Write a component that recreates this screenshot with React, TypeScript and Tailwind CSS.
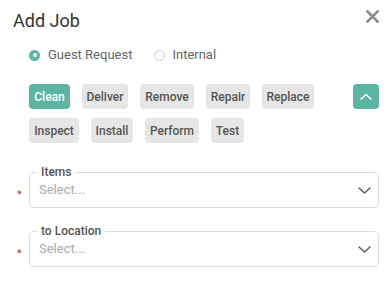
import React from "react";

const chipsRow1: [string, number][] = [
  ["Clean", 41],
  ["Deliver", 46],
  ["Remove", 54],
  ["Repair", 44],
  ["Replace", 52],
];
const chipsRow2: [string, number][] = [
  ["Inspect", 50],
  ["Install", 42],
  ["Perform", 54],
  ["Test", 33],
];

function Chip({ label, width, active }: { label: string; width: number; active?: boolean }) {
  return (
    <div
      style={{ width }}
      className={
        "h-[25px] flex items-center justify-center rounded-[4px] text-[12px] font-medium " +
        (active ? "bg-[#5cb5a3] text-white" : "bg-[#e6e6e6] text-[#555]")
      }
    >
      {label}
    </div>
  );
}

function Field({ label }: { label: string }) {
  return (
    <div className="flex items-start">
      <div className="w-4 pt-[24px] text-[11px] leading-none text-[#c0392b] pl-[4px]">*</div>
      <fieldset className="flex-1 border border-[#dcdcdc] rounded-[4px] pl-[7px] pr-[7px] pb-[6px] m-0 min-w-0">
        <legend className="px-[4px] text-[12px] leading-[14px] font-medium text-[#555]">{label}</legend>
        <div className="h-[22px] flex items-center justify-between pl-[2px]">
          <span className="text-[13px] text-[#aaa]">Select...</span>
          <svg width="13" height="7" viewBox="0 0 13 7" fill="none">
            <path d="M1 1L6.5 6L12 1" stroke="#555" strokeWidth="1.4" strokeLinecap="round" strokeLinejoin="round" />
          </svg>
        </div>
      </fieldset>
    </div>
  );
}

export default function App() {
  return (
    <div className="w-[392px] h-[283px] bg-white px-[13px] pt-[9px]" style={{ fontFamily: "Roboto, 'Liberation Sans', sans-serif" }}>
      <div className="flex justify-between items-start">
        <div className="text-[18px] leading-6 text-[#333]">Add Job</div>
        <svg width="13" height="13" viewBox="0 0 13 13" className="mt-[1px]">
          <path d="M1.5 1.5L11.5 11.5M11.5 1.5L1.5 11.5" stroke="#8c8c8c" strokeWidth="2.6" strokeLinecap="square" />
        </svg>
      </div>
      <div className="pl-4">
        <div className="mt-3 h-5 flex items-center text-[13px] text-[#666]">
          <div className="w-[11px] h-[11px] rounded-full bg-[#5cb5a3] flex items-center justify-center">
            <div className="w-[4px] h-[4px] rounded-full bg-white" />
          </div>
          <span className="ml-2">Guest Request</span>
          <div className="ml-[22px] w-[11px] h-[11px] rounded-full border border-[#ccc]" />
          <span className="ml-[7px]">Internal</span>
        </div>
        <div className="mt-[19px] flex items-center">
          <div className="flex gap-3 flex-1">
            {chipsRow1.map(([c, w], i) => (
              <Chip key={c} label={c} width={w} active={i === 0} />
            ))}
          </div>
          <div className="w-[26px] h-[25px] rounded-[4px] bg-[#5cb5a3] flex items-center justify-center">
            <svg width="12" height="7" viewBox="0 0 12 7" fill="none">
              <path d="M1 6L6 1.5L11 6" stroke="white" strokeWidth="1.6" strokeLinecap="round" strokeLinejoin="round" />
            </svg>
          </div>
        </div>
        <div className="mt-[9px] flex gap-3">
          {chipsRow2.map(([c, w]) => (
            <Chip key={c} label={c} width={w} />
          ))}
        </div>
      </div>
      <div className="mt-[22px]">
        <Field label="Items" />
      </div>
      <div className="mt-[16px]">
        <Field label="to Location" />
      </div>
    </div>
  );
}
